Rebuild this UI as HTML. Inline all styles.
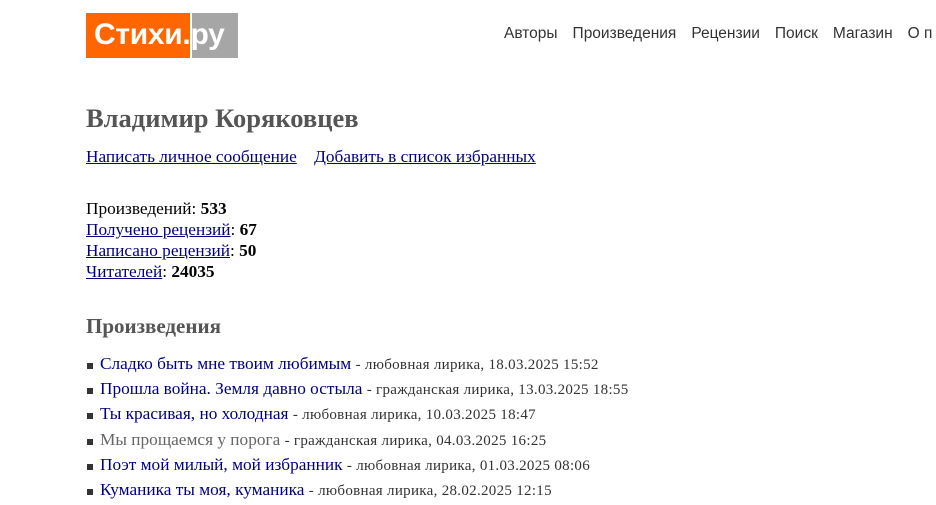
<!DOCTYPE html>
<html><head><meta charset="utf-8"><style>
body{margin:0;background:#fff;width:936px;height:494px;overflow:hidden;position:relative;font-family:"Liberation Serif",serif;}
.logo{position:absolute;left:86px;top:13px;height:45px;}
.lo{position:absolute;left:0;top:0;width:104px;height:45px;background:#ff6600;}
.lg{position:absolute;left:106px;top:0;width:46px;height:45px;background:#a6a6a6;}
.lt{position:absolute;left:8px;top:5px;font-family:"Liberation Sans",sans-serif;font-size:30px;font-weight:bold;color:#fff;white-space:nowrap;letter-spacing:-0.3px;}
.nav{position:absolute;left:504px;top:25px;font-family:"Liberation Sans",sans-serif;font-size:15.5px;color:#333;white-space:nowrap;}
.nav span{margin-right:15px}
h1{position:absolute;left:86px;top:103px;margin:0;font-size:26.5px;color:#555;font-weight:bold;}
.links{position:absolute;left:86px;top:147px;font-size:17.3px;}
a{color:#000080;text-decoration:underline}
.stats{position:absolute;left:86px;top:198px;font-size:17.3px;line-height:21px;}
h2{position:absolute;left:86px;top:314px;margin:0;font-size:21px;color:#555;}
ul{position:absolute;left:86px;top:354px;margin:0;padding:0;list-style:none;font-size:17.3px;}
li{height:25.2px;position:relative;padding-left:14px;white-space:nowrap}
li:before{content:"";position:absolute;left:1px;top:9px;width:6px;height:6px;background:#333}
li a{text-decoration:none}
small{font-size:15px;letter-spacing:0.3px;color:#333}
</style></head><body>
<div class="logo"><div class="lo"></div><div class="lg"></div><div class="lt">Стихи.ру</div></div>
<div class="nav"><span>Авторы</span><span>Произведения</span><span>Рецензии</span><span>Поиск</span><span>Магазин</span><span>О п</span></div>
<h1>Владимир Коряковцев</h1>
<div class="links"><a>Написать личное сообщение</a>&nbsp;&nbsp;&nbsp;&nbsp;<a>Добавить в список избранных</a></div>
<div class="stats">Произведений: <b>533</b><br><a>Получено рецензий</a>: <b>67</b><br><a>Написано рецензий</a>: <b>50</b><br><a>Читателей</a>: <b>24035</b></div>
<h2>Произведения</h2>
<ul>
<li><a>Сладко быть мне твоим любимым</a> <small>- любовная лирика, 18.03.2025 15:52</small></li>
<li><a>Прошла война. Земля давно остыла</a> <small>- гражданская лирика, 13.03.2025 18:55</small></li>
<li><a>Ты красивая, но холодная</a> <small>- любовная лирика, 10.03.2025 18:47</small></li>
<li><a style="color:#666">Мы прощаемся у порога</a> <small>- гражданская лирика, 04.03.2025 16:25</small></li>
<li><a>Поэт мой милый, мой избранник</a> <small>- любовная лирика, 01.03.2025 08:06</small></li>
<li><a>Куманика ты моя, куманика</a> <small>- любовная лирика, 28.02.2025 12:15</small></li>
</ul>
</body></html>
